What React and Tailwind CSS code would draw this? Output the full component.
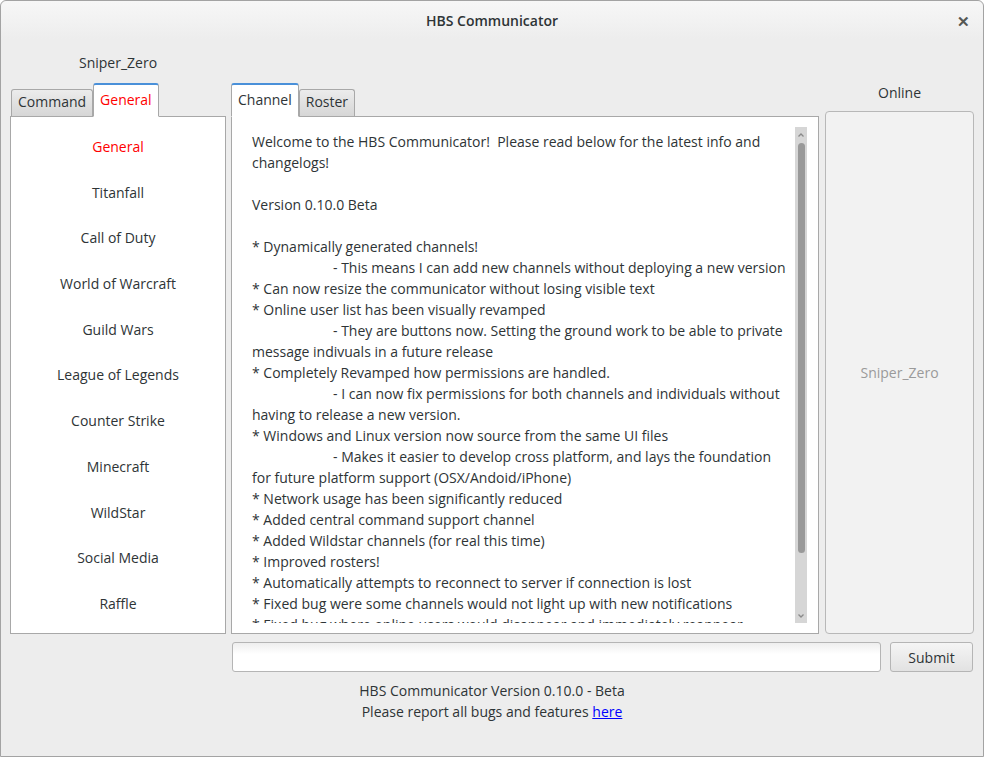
import React from 'react'

const channels = [
  'General', 'Titanfall', 'Call of Duty', 'World of Warcraft', 'Guild Wars',
  'League of Legends', 'Counter Strike', 'Minecraft', 'WildStar', 'Social Media', 'Raffle',
]

// [indented, text]
const lines = [
  [0, 'Welcome to the HBS Communicator!\u00a0 Please read below for the latest info and'],
  [0, 'changelogs!'],
  [0, ''],
  [0, 'Version 0.10.0 Beta'],
  [0, ''],
  [0, '* Dynamically generated channels!'],
  [1, '- This means I can add new channels without deploying a new version'],
  [0, '* Can now resize the communicator without losing visible text'],
  [0, '* Online user list has been visually revamped'],
  [1, '- They are buttons now. Setting the ground work to be able to private'],
  [0, 'message indivuals in a future release'],
  [0, '* Completely Revamped how permissions are handled.'],
  [1, '- I can now fix permissions for both channels and individuals without'],
  [0, 'having to release a new version.'],
  [0, '* Windows and Linux version now source from the same UI files'],
  [1, '- Makes it easier to develop cross platform, and lays the foundation'],
  [0, 'for future platform support (OSX/Andoid/iPhone)'],
  [0, '* Network usage has been significantly reduced'],
  [0, '* Added central command support channel'],
  [0, '* Added Wildstar channels (for real this time)'],
  [0, '* Improved rosters!'],
  [0, '* Automatically attempts to reconnect to server if connection is lost'],
  [0, '* Fixed bug were some channels would not light up with new notifications'],
  [0, '* Fixed bug where online users would disappear and immediately reappear'],
]

const Tab = ({ label, active, red }) =>
  active ? (
    <div className={`h-[34px] -mb-px relative z-10 px-[6px] pt-[4px] bg-white border border-[#a8a8a8] border-b-white border-t-2 border-t-[#4a90d9] rounded-t-[3px] ${red ? 'text-[#ff0000]' : ''}`}>
      {label}
    </div>
  ) : (
    <div className="h-[27px] px-[6px] pt-[1px] bg-gradient-to-b from-[#ececec] to-[#d6d6d6] border border-[#a8a8a8] border-b-0 rounded-t-[3px]">
      {label}
    </div>
  )

export default function App() {
  return (
    <div
      className="w-[984px] h-[757px] bg-[#ededed] text-[#2e3436] text-[14px] border border-[#a3a3a3] rounded-t-[6px] flex flex-col overflow-hidden"
      style={{ fontFamily: '"Open Sans", "Noto Sans", sans-serif' }}
    >
      {/* title bar */}
      <div className="h-[38px] shrink-0 bg-gradient-to-b from-[#f7f7f7] to-[#ededed] rounded-t-[6px] flex items-center justify-center relative">
        <span className="font-semibold">HBS Communicator</span>
        <span className="absolute right-[13px] top-[9px] text-[#555753] font-bold text-[15px]">✕</span>
      </div>

      <div className="flex px-[9px] gap-[5px]">
        {/* left column */}
        <div className="w-[216px] flex flex-col">
          <div className="h-[44px] flex items-center justify-center pt-[2px]">Sniper_Zero</div>
          <div className="flex items-end h-[33px] pl-[1px]">
            <Tab label="Command" />
            <Tab label="General" active red />
          </div>
          <div className="h-[518px] bg-white border border-[#a8a8a8] flex flex-col items-center pt-[20px] overflow-hidden">
            {channels.map((c, i) => (
              <div key={c} className={`shrink-0 h-[45.7px] leading-[20px] ${i === 0 ? 'text-[#ff0000]' : ''}`}>{c}</div>
            ))}
          </div>
        </div>

        {/* middle column */}
        <div className="w-[588px] flex flex-col">
          <div className="h-[44px]" />
          <div className="flex items-end h-[33px]">
            <Tab label="Channel" active />
            <Tab label="Roster" />
          </div>
          <div className="h-[518px] bg-white border border-[#a8a8a8] p-[10px] flex gap-[8px]">
            <div className="flex-1 overflow-hidden pl-[10px] pt-[4px]">
              {lines.map(([ind, t], i) => (
                <div key={i} className={`h-[21px] leading-[21px] whitespace-nowrap ${ind ? 'pl-[81px]' : ''}`}>{t}</div>
              ))}
            </div>
            <div className="w-[12px] bg-[#d6d6d6] flex flex-col items-center mr-[1px]">
              <svg width="8" height="8" viewBox="0 0 8 8" className="mt-[4px]">
                <path d="M1.5 5.5 L4 3 L6.5 5.5" stroke="#8a8a8a" strokeWidth="1.3" fill="none" />
              </svg>
              <div className="w-[7px] h-[410px] mt-[4px] bg-[#999999] rounded-full" />
              <div className="flex-1" />
              <svg width="8" height="8" viewBox="0 0 8 8" className="mb-[3px]">
                <path d="M1.5 2.5 L4 5 L6.5 2.5" stroke="#8a8a8a" strokeWidth="1.3" fill="none" />
              </svg>
            </div>
          </div>
        </div>

        {/* right column */}
        <div className="ml-[1px] w-[149px] flex flex-col">
          <div className="h-[72px] flex items-end justify-center pb-[8px]">Online</div>
          <div className="h-[523px] bg-[#f2f2f2] border border-[#b8b8b8] rounded-[4px] flex items-center justify-center text-[#9a9a9a]">
            Sniper_Zero
          </div>
        </div>
      </div>

      {/* input row */}
      <div className="flex gap-[9px] pl-[231px] pr-[10px] mt-[8px]">
        <div className="w-[649px] h-[30px] rounded-[3px] border border-[#b5b5b5] bg-gradient-to-b from-[#eeeeee] to-white to-[40%]" />
        <div className="w-[83px] h-[30px] rounded-[3px] border border-[#b5b5b5] bg-gradient-to-b from-[#f5f5f5] to-[#e2e2e2] flex items-center justify-center">
          Submit
        </div>
      </div>

      {/* footer */}
      <div className="flex flex-col items-center mt-[8px] leading-[21px]">
        <div>HBS Communicator Version 0.10.0 - Beta</div>
        <div>
          Please report all bugs and features <a className="text-[#0000ff] underline">here</a>
        </div>
      </div>
    </div>
  )
}
